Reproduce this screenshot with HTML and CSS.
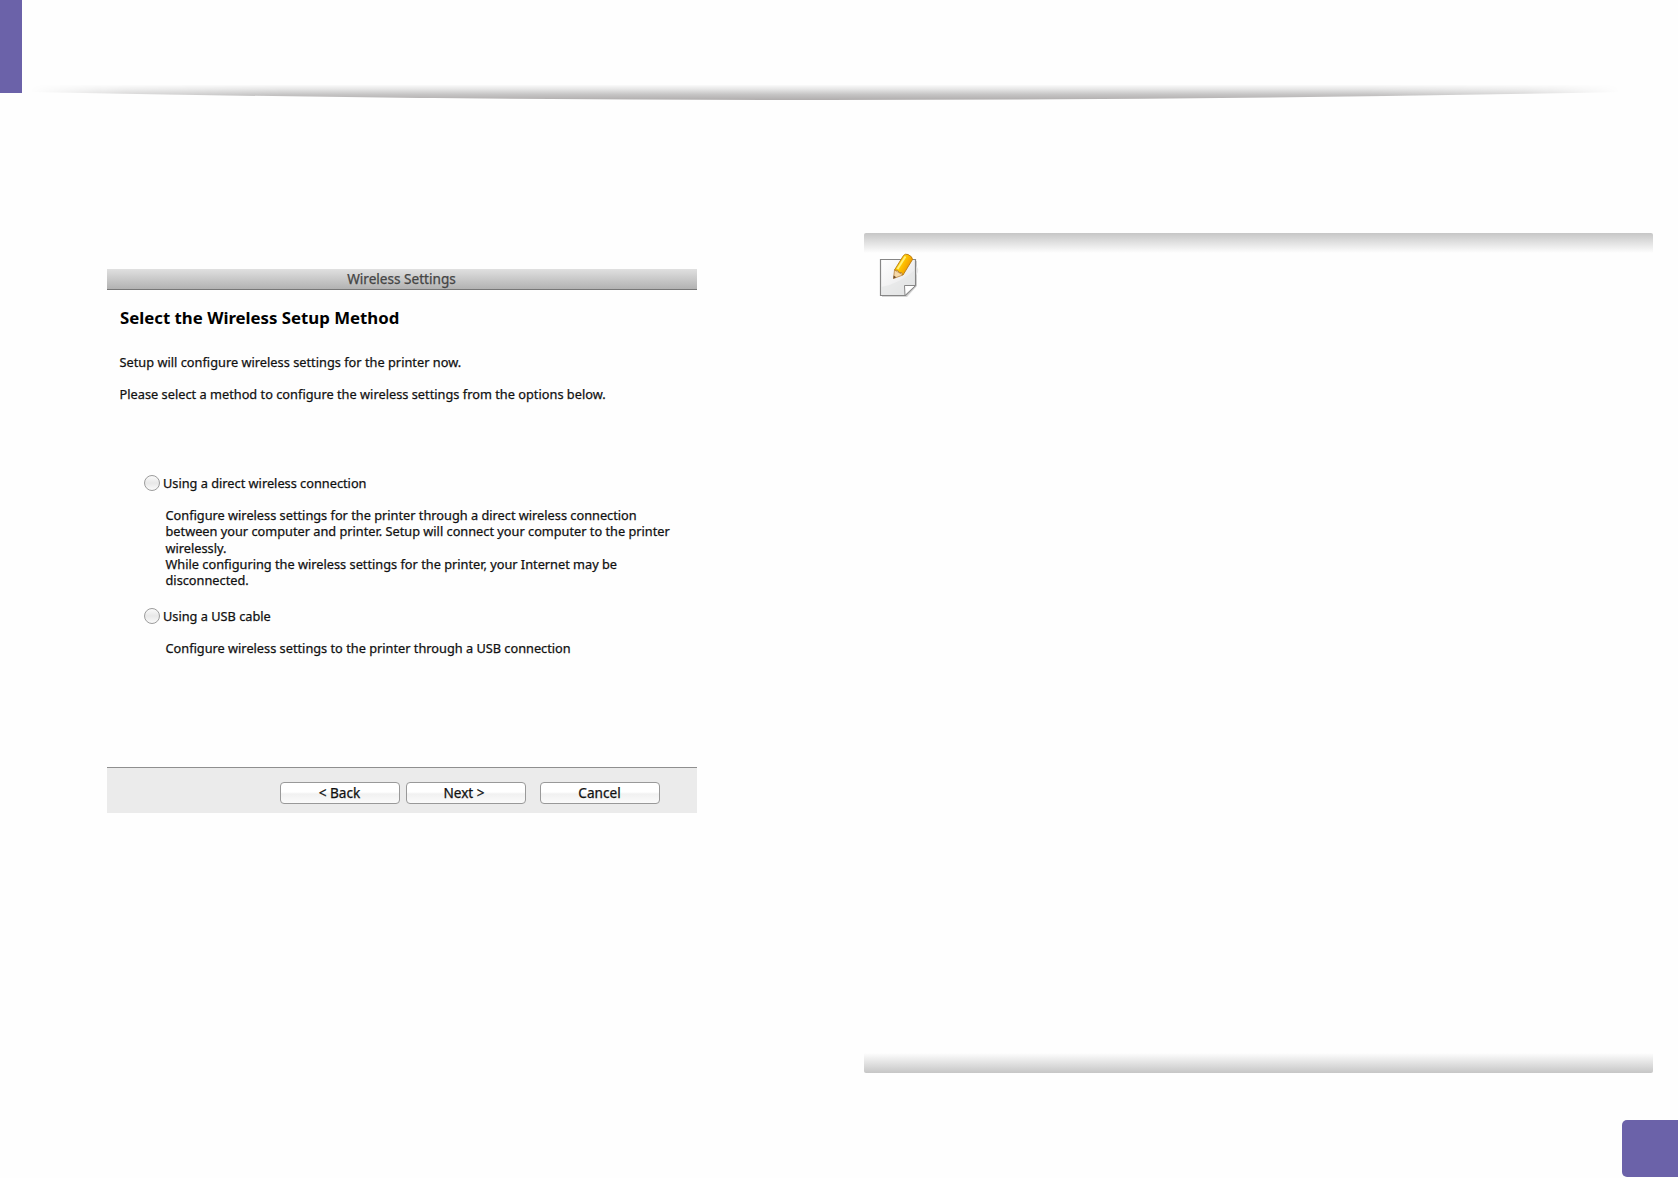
FILE: index.html
```html
<!DOCTYPE html>
<html lang="en">
<head>
    <meta charset="UTF-8">
    <meta name="viewport" content="width=device-width, initial-scale=1.0">
    <title>Wireless Settings</title>
    <link rel="stylesheet" href="styles.css">
</head>
<body>
    <div class="page">
        <header class="page-header">
            <div class="chapter-tab"></div>
            <svg class="header-shadow" width="1590" height="18" viewBox="0 0 1590 18">
                <defs>
                    <linearGradient id="shade" gradientUnits="userSpaceOnUse" x1="0" y1="0" x2="0" y2="16">
                        <stop offset="0" stop-color="#ffffff"/>
                        <stop offset="0.3" stop-color="#e8e8e8"/>
                        <stop offset="0.65" stop-color="#c6c5c5"/>
                        <stop offset="1" stop-color="#b0adad"/>
                    </linearGradient>
                    <linearGradient id="fade" x1="0" y1="0" x2="1" y2="0">
                        <stop offset="0" stop-color="#000"/>
                        <stop offset="0.06" stop-color="#aaa"/>
                        <stop offset="0.16" stop-color="#fff"/>
                        <stop offset="0.84" stop-color="#fff"/>
                        <stop offset="0.94" stop-color="#aaa"/>
                        <stop offset="1" stop-color="#000"/>
                    </linearGradient>
                    <mask id="ends"><rect width="1590" height="18" fill="url(#fade)"/></mask>
                </defs>
                <path d="M0 1H1590V8Q795 24 0 8Z" fill="url(#shade)" mask="url(#ends)"/>
            </svg>
        </header>

        <main class="columns">
            <section class="dialog">
                <div class="title-bar">Wireless Settings</div>
                <div class="dialog-body">
                    <h1>Select the Wireless Setup Method</h1>
                    <p class="intro">Setup will configure wireless settings for the printer now.</p>
                    <p class="intro">Please select a method to configure the wireless settings from the options below.</p>

                    <div class="options">
                        <label class="option">
                            <input type="radio" name="method">
                            <span>Using a direct wireless connection</span>
                        </label>
                        <p class="description">
                            Configure wireless settings for the printer through a direct wireless connection<br>
                            between your computer and printer. Setup will connect your computer to the printer<br>
                            wirelessly.<br>
                            While configuring the wireless settings for the printer, your Internet may be<br>
                            disconnected.
                        </p>
                        <label class="option">
                            <input type="radio" name="method">
                            <span>Using a USB cable</span>
                        </label>
                        <p class="description">Configure wireless settings to the printer through a USB connection</p>
                    </div>
                </div>
                <div class="dialog-footer">
                    <button>&lt; Back</button>
                    <button class="next">Next &gt;</button>
                    <button class="cancel">Cancel</button>
                </div>
            </section>

            <aside class="note">
                <svg class="note-icon" width="42" height="46" viewBox="0 0 42 46">
                    <defs>
                        <linearGradient id="paper" x1="0" y1="0" x2="1" y2="1">
                            <stop offset="0" stop-color="#ffffff"/>
                            <stop offset="0.5" stop-color="#f1f1f2"/>
                            <stop offset="1" stop-color="#dedfe0"/>
                        </linearGradient>
                        <linearGradient id="pencil" x1="0" y1="0" x2="1" y2="0.6">
                            <stop offset="0" stop-color="#ffe01a"/>
                            <stop offset="0.5" stop-color="#ffc800"/>
                            <stop offset="1" stop-color="#ee8c00"/>
                        </linearGradient>
                    </defs>
                    <path d="M3 8H38V33L28 44H3Z" fill="#d6d6d6"/>
                    <path d="M37 13Q41 16 38 21L36 23Z" fill="#e9e9ea"/>
                    <path d="M1.5 6.500H36.500V32.500L26.500 42.500H1.500Z" fill="url(#paper)" stroke="#868686" stroke-width="1.200"/>
                    <path d="M2 34Q20 31 36 17V32L26 42H2Z" fill="#e3e4e5" opacity="0.6"/>
                    <path d="M26 42.500L25.500 32.500H36.500Z" fill="#fff" stroke="#868686"/>
                    <path d="M14.500 25.500L15.500 17L24 22Z" fill="#f6d9a8" stroke="#b98440" stroke-width="0.800"/>
                    <path d="M14.300 25.800L14.700 22.500L17.300 24.200Z" fill="#6b4a2a"/>
                    <path d="M15.500 17L24.500 2.500Q26 0.500 29 1.500Q33.500 3.500 33.500 6.500L24 22Q23 18.500 20.500 19.500Q19 16.500 15.500 17Z" fill="url(#pencil)" stroke="#b97a10" stroke-width="0.900"/>
                    <path d="M18.500 16L26.500 3.500" stroke="#fff07a" stroke-width="2" fill="none"/>
                </svg>
            </aside>
        </main>

        <div class="page-number"></div>
    </div>
</body>
</html>
```
FILE: styles.css
```css
:root {
    --accent: #6b62a9;
    --text-color: #111;
}

* {
    margin: 0;
    padding: 0;
    box-sizing: border-box;
}

body {
    font-family: 'Noto Sans', sans-serif;
    font-size: 12.75px;
    line-height: 16.3px;
    color: var(--text-color);
    -webkit-text-stroke: 0.25px;
    background-color: #fefefe;
}

.page {
    display: flex;
    flex-direction: column;
    height: 1178px;
    overflow: hidden;
}

.page-header {
    display: flex;
    height: 233px;
}

.chapter-tab {
    width: 22px;
    height: 93px;
    background-color: var(--accent);
}

.header-shadow {
    margin: 84px 0 0 8px;
}

.columns {
    display: flex;
    justify-content: space-between;
    align-items: flex-start;
    padding: 0 25px 0 107px;
}

.dialog {
    width: 590px;
    height: 544px;
    margin-top: 36px;
    display: flex;
    flex-direction: column;
}

.title-bar {
    height: 21px;
    padding-right: 1px;
    line-height: 19px;
    font-size: 13.6px;
    text-align: center;
    color: #444;
    background: linear-gradient(#e0e0e0, #b2b2b2);
    border-bottom: 1px solid #777;
}

.dialog-body {
    flex: 1;
    padding: 17px 12.5px 0;
}

h1 {
    font-size: 16.8px;
    line-height: 22px;
    font-weight: 700;
    color: #000;
    -webkit-text-stroke: 0;
    margin: 0 0 24.5px 0.5px;
}

.intro {
    margin-bottom: 16.7px;
    letter-spacing: 0.015px;
}

.options {
    padding: 55.5px 0 0 24.5px;
}

.option {
    display: flex;
    align-items: center;
    gap: 3px;
    height: 16px;
}

.option input {
    appearance: none;
    width: 16px;
    height: 16px;
    margin-top: 1px;
    border: 1px solid #9c9c9c;
    border-radius: 50%;
    background: linear-gradient(#fafafa, #e8e8e8 50%, #fafafa);
}

.description {
    margin: 16px 0 19.5px 21.5px;
    white-space: nowrap;
}

.dialog-footer {
    display: flex;
    justify-content: flex-end;
    height: 46px;
    padding: 14px 37px 0 0;
    gap: 6px;
    background-color: #ebebeb;
    border-top: 1px solid #8f8f8f;
}

button {
    width: 120px;
    height: 22px;
    padding-right: 1px;
    font: 13.6px/18px 'Noto Sans', sans-serif;
    color: #111;
    -webkit-text-stroke: 0.25px;
    border: 1px solid #999;
    border-radius: 4px;
    background: linear-gradient(#ffffff 45%, #f1f1f1 55%, #fbfbfb);
}

.next {
    padding-right: 4px;
}

.cancel {
    margin-left: 8px;
}

.note {
    width: 789px;
    height: 840px;
    padding: 20px 0 0 15px;
    border-radius: 2px;
    background:
        linear-gradient(#c6c6c6, #fefefe) top / 100% 20px no-repeat,
        linear-gradient(#fefefe, #c6c6c6) bottom / 100% 20px no-repeat;
}

.page-number {
    align-self: flex-end;
    width: 56px;
    height: 57px;
    margin-top: 47px;
    background-color: var(--accent);
    border-radius: 5px 0 0 5px;
}
```
